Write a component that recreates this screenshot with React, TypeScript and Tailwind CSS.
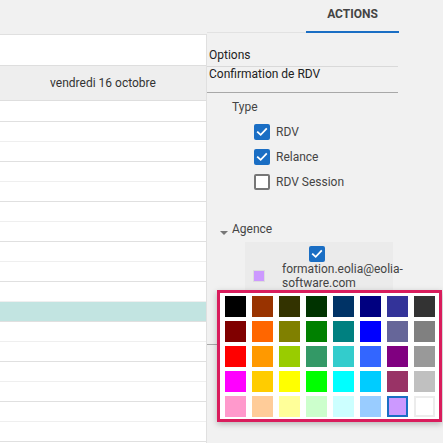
import React from "react";

const COLORS = [
  "#000000", "#993300", "#333300", "#003300", "#003366", "#000080", "#333399", "#333333",
  "#800000", "#FF6600", "#808000", "#008000", "#008080", "#0000FF", "#666699", "#808080",
  "#FF0000", "#FF9900", "#99CC00", "#339966", "#33CCCC", "#3366FF", "#800080", "#999999",
  "#FF00FF", "#FFCC00", "#FFFF00", "#00FF00", "#00FFFF", "#00CCFF", "#993366", "#C0C0C0",
  "#FF99CC", "#FFCC99", "#FFFF99", "#CCFFCC", "#CCFFFF", "#99CCFF", "#CC99FF", "#FFFFFF",
];

function CheckBox({ checked }: { checked: boolean }) {
  if (checked) {
    return (
      <div className="w-[16px] h-[16px] rounded-[2px] bg-[#1a6ec4] flex items-center justify-center shrink-0">
        <svg width="14" height="14" viewBox="0 0 16 16">
          <path d="M3.2 8.2 L6.5 11.3 L12.8 4.6" fill="none" stroke="#fff" strokeWidth="2" strokeLinecap="square" />
        </svg>
      </div>
    );
  }
  return <div className="w-[16px] h-[16px] rounded-[2px] border-2 border-[#777777] bg-white shrink-0" />;
}

export default function App() {
  const rows = Array.from({ length: 17 }, (_, i) => i);
  return (
    <div className="w-[443px] h-[443px] bg-[#f1f1f1] relative overflow-hidden flex font-['Roboto',sans-serif] text-[12px]">
      {/* Left calendar */}
      <div className="w-[207px] shrink-0 pt-[34px] flex flex-col">
        <div className="flex-1 bg-white border-t border-r border-[#e0e0e0] flex flex-col overflow-hidden">
          <div className="h-[30px] shrink-0" />
          <div className="h-[36px] shrink-0 bg-[#eeeeee] border-y border-[#dedede] flex items-center justify-center text-[#333] text-[12px]">
            vendredi 16 octobre
          </div>
          {rows.map((i) => (
            <div
              key={i}
              className={
                (i === 0 ? "h-[21px] " : "h-[20px] ") +
                "shrink-0 border-b " +
                (i === 10
                  ? "bg-[#c2e4e1] border-[#e0e0e0]"
                  : i % 2 === 0
                  ? "border-[#e0e0e0]"
                  : "border-[#efefef]")
              }
            />
          ))}
        </div>
      </div>

      {/* Right panel */}
      <div className="flex-1 flex flex-col">
        <div className="h-[33px] flex shrink-0">
          <div className="w-[99px] border-b border-[#e2e2e2]" />
          <div className="w-[93px] border-b-2 border-[#1a6ec4] flex items-center justify-center font-bold text-[#444] pb-[3px] text-[12px]">
            ACTIONS
          </div>
        </div>
        <div className="w-[191px] flex flex-col">
          <div className="h-[34px] flex items-end pb-[4px] pl-[2px] border-b border-[#d9d9d9] text-[#222] leading-[14px]">
            Options
          </div>
          <div className="h-[26px] pl-[2px] border-b border-[#a8a8a8] text-[#222] leading-[14px]">
            Confirmation de RDV
          </div>
          <div className="mt-[7px] pl-[25px] leading-[14px] text-[#444]">Type</div>
          <div className="mt-[5px] flex flex-col">
            {[
              ["RDV", true],
              ["Relance", true],
              ["RDV Session", false],
            ].map(([label, c]) => (
              <div key={label as string} className="h-[25px] flex items-center pl-[47px]">
                <CheckBox checked={c as boolean} />
                <span className="ml-[6px] text-[#444] leading-[14px]">{label as string}</span>
              </div>
            ))}
          </div>
          <div className="mt-[28px] flex items-end pl-[13px] leading-[14px]">
            <div className="w-0 h-0 border-l-[4px] border-r-[4px] border-t-[4px] border-l-transparent border-r-transparent border-t-[#777] mb-[1px]" />
            <span className="ml-[4px] text-[#444]">Agence</span>
          </div>
          <div className="mt-[6px] ml-[38px] w-[148px] bg-[#ebebeb] pt-[4px] pb-[4px]">
            <div className="pl-[64px]">
              <CheckBox checked={true} />
            </div>
            <div className="flex items-center">
              <div className="ml-[8px] w-[12px] h-[12px] bg-[#cc99ff] border border-[#dddddd] shrink-0" />
              <div className="ml-[17px] w-[125px] shrink-0 leading-[14px] text-[#444]">
                formation.eolia@eolia-software.com
              </div>
            </div>
          </div>
          <div className="mt-[50px] h-px bg-[#a8a8a8]" />
        </div>
      </div>

      {/* Color picker popup */}
      <div className="absolute left-[217px] top-[290px] w-[225px] h-[132px] border-[3px] border-[#d91c5c] bg-white shadow-[0_2px_6px_rgba(0,0,0,0.25)] pt-[3px] pl-[5px]">
        <div className="grid grid-cols-[repeat(8,21px)] auto-rows-[21px] gap-x-[6px] gap-y-[4px]">
          {COLORS.map((c, i) => (
            <div
              key={i}
              className={
                i === 38
                  ? "border-2 border-[#1a6ec4]"
                  : i === 39
                  ? "border-2 border-[#ececec]"
                  : ""
              }
              style={{ backgroundColor: c }}
            />
          ))}
        </div>
      </div>
    </div>
  );
}
